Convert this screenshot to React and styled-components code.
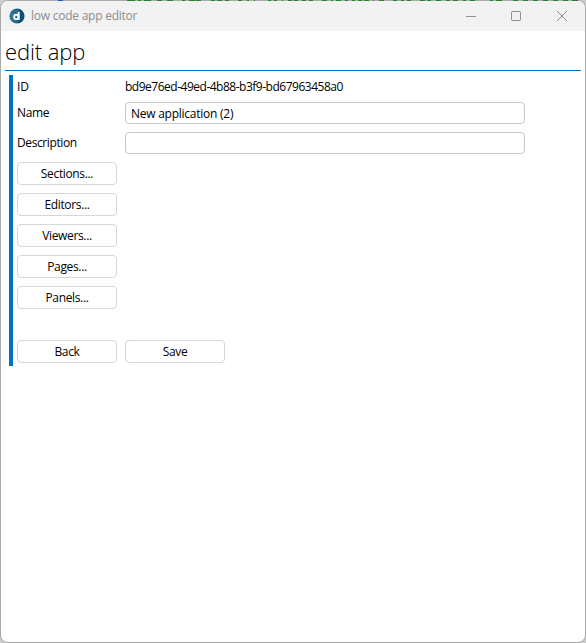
import React from "react";
import styled, { createGlobalStyle } from "styled-components";

const Global = createGlobalStyle`
  *, *::before, *::after { box-sizing: border-box; }
  body { margin: 0; background: #c9c9c9; overflow: hidden; }
`;

const Desktop = styled.div`
  width: 586px;
  height: 643px;
  background: #cbcbcb;
  font-family: "Open Sans", "Noto Sans", sans-serif;
`;

const AppWindow = styled.main`
  display: flex;
  flex-direction: column;
  width: 586px;
  height: 643px;
  overflow: hidden;
  border: 1px solid #a9a9a9;
  border-radius: 8px;
  background: #fff;
`;

/* Slivers of the code editor behind the window, showing above its frame. */
const Backdrop = styled.svg`
  position: absolute;
  top: 0;
  left: 0;
`;

const TitleBar = styled.header`
  display: flex;
  align-items: center;
  height: 30px;
  flex: none;
  padding-left: 8px;
  background: #f2f2f2;
`;

const AppIcon = styled.svg`
  flex: none;
  margin-bottom: 1px;
`;

const WindowTitle = styled.span`
  flex: 1;
  margin-left: 6px;
  color: #8e8e8e;
  font-size: 12px;
  line-height: 16px;
  letter-spacing: -0.24px;
`;

const CaptionButton = styled.button`
  display: flex;
  align-items: center;
  justify-content: center;
  width: 46px;
  height: 30px;
  padding: 0;
  border: 0;
  background: none;
  color: #8f8f8f;
`;

const Heading = styled.h1`
  height: 40px;
  flex: none;
  margin: 0 4px;
  border-bottom: 1px solid #0072c6;
  color: #000;
  font-size: 22px;
  font-weight: 300;
  line-height: 41px;
  letter-spacing: -0.1px;
`;

const Form = styled.form`
  display: flex;
  flex-direction: column;
  height: 291px;
  margin: 4px 8px 0;
  padding-left: 4px;
  border-left: 4px solid #0072c6;
`;

const Field = styled.div`
  display: grid;
  grid-template-columns: 100px 400px;
  column-gap: 8px;
  align-items: center;
  height: ${(p) => p.$height}px;
  margin-bottom: ${(p) => p.$gap}px;
`;

const Text = styled.span`
  color: #000;
  font-size: 12px;
  line-height: 16px;
  letter-spacing: ${(p) => p.$tracking}px;
  white-space: nowrap;
`;

const Input = styled.input`
  width: 400px;
  height: 22px;
  padding: 1px 5px 0;
  border: 1px solid #c8c8c8;
  border-radius: 4px;
  outline: 0;
  background: #fff;
  color: #000;
  font: 12px/16px "Open Sans", "Noto Sans", sans-serif;
  letter-spacing: -0.25px;
`;

const Buttons = styled.div`
  display: flex;
  flex-direction: ${(p) => (p.$row ? "row" : "column")};
  gap: 8px;
  margin-top: ${(p) => p.$top}px;
`;

const Button = styled.button`
  width: 100px;
  height: 23px;
  padding: 0;
  border: 1px solid #d6d6d6;
  border-radius: 4px;
  background: #fff;
  color: #000;
  font: 12px/16px "Open Sans", "Noto Sans", sans-serif;
  letter-spacing: -0.35px;
`;

const specks = [
  [58, 5, "#1763ae"], [127, 8], [138, 3], [144, 7], [157, 5], [167, 6], [182, 3],
  [189, 6], [196, 5], [211, 4], [217, 5], [225, 4], [238, 4], [247, 2], [254, 1],
  [268, 3], [274, 3], [282, 1], [288, 4], [294, 4], [302, 4], [309, 4], [322, 5],
  [331, 2], [336, 5], [345, 3], [352, 3], [358, 4], [364, 5], [373, 1], [379, 5],
  [393, 4], [401, 3], [407, 4], [420, 5], [427, 4], [436, 5], [446, 4], [453, 5],
  [463, 3], [470, 5], [490, 3], [496, 6], [513, 5], [523, 5], [533, 5], [543, 5],
  [553, 5], [563, 5], [572, 6],
];

export default function App() {
  return (
    <Desktop>
      <Global />
      <AppWindow>
        <TitleBar>
          <AppIcon width="16" height="16" viewBox="0 0 16 16">
            <defs>
              <linearGradient id="disc" x1="0" y1="0" x2="1" y2="0">
                <stop offset="0" stopColor="#34789b" />
                <stop offset="0.55" stopColor="#24658a" />
                <stop offset="0.56" stopColor="#0d4a70" />
                <stop offset="1" stopColor="#105075" />
              </linearGradient>
            </defs>
            <circle cx="8" cy="8" r="7.6" fill="url(#disc)" />
            <circle cx="7.3" cy="8.9" r="2.2" fill="none" stroke="#fff" strokeWidth="1.9" />
            <path d="M9.7 3.7v8.3" stroke="#fff" strokeWidth="1.9" />
          </AppIcon>
          <WindowTitle>low code app editor</WindowTitle>
          <CaptionButton aria-label="Minimize">
            <svg width="12" height="12" fill="none" stroke="currentColor">
              <path d="M2 6.5h10" />
            </svg>
          </CaptionButton>
          <CaptionButton aria-label="Maximize">
            <svg width="12" height="12" fill="none" stroke="currentColor">
              <rect x="1.5" y="1.5" width="9" height="9" rx="0.7" />
            </svg>
          </CaptionButton>
          <CaptionButton aria-label="Close">
            <svg width="12" height="12" fill="none" stroke="currentColor">
              <path d="M1 1l10 10M11 1L1 11" />
            </svg>
          </CaptionButton>
        </TitleBar>
        <Heading>edit app</Heading>
        <Form onSubmit={(e) => e.preventDefault()}>
          <Field $height={24} $gap={3}>
            <Text $tracking={-0.2}>ID</Text>
            <Text $tracking={-0.49}>bd9e76ed-49ed-4b88-b3f9-bd67963458a0</Text>
          </Field>
          <Field $height={22} $gap={8}>
            <Text $tracking={-0.35}>Name</Text>
            <Input defaultValue="New application (2)" />
          </Field>
          <Field $height={22} $gap={0}>
            <Text $tracking={-0.39}>Description</Text>
            <Input aria-label="Description" />
          </Field>
          <Buttons $top={8}>
            <Button type="button">Sections...</Button>
            <Button type="button">Editors...</Button>
            <Button type="button">Viewers...</Button>
            <Button type="button">Pages...</Button>
            <Button type="button">Panels...</Button>
          </Buttons>
          <Buttons $row $top={31}>
            <Button type="button">Back</Button>
            <Button type="button">Save</Button>
          </Buttons>
        </Form>
      </AppWindow>
      <Backdrop width="586" height="1" aria-hidden="true">
        {specks.map(([x, w, color = "#27802a"]) => (
          <rect key={x} x={x} y="0" width={w} height="1" fill={color} />
        ))}
      </Backdrop>
    </Desktop>
  );
}
